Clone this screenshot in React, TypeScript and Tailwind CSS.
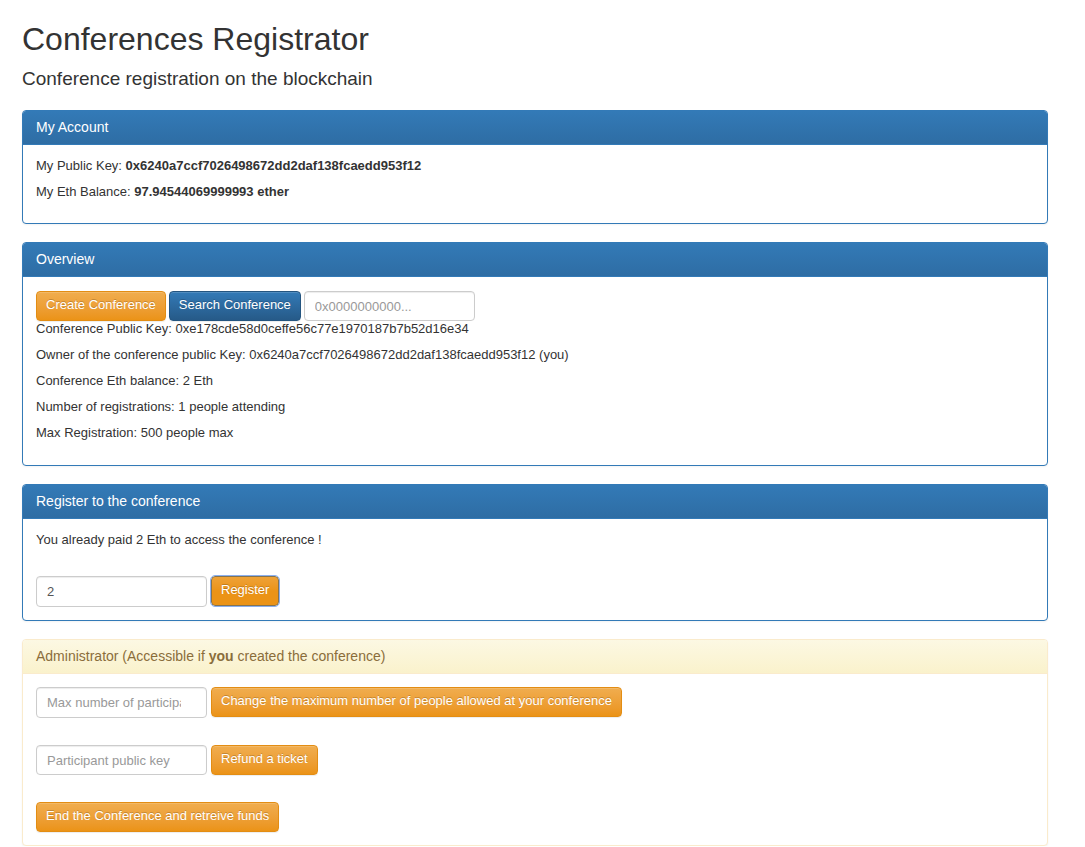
import type { ButtonHTMLAttributes, InputHTMLAttributes, ReactNode } from "react";
import clsx from "clsx";

type PanelProps = {
  title: ReactNode;
  tone?: "primary" | "warning";
  bodyClassName?: string;
  children: ReactNode;
};

function Panel({ title, tone = "primary", bodyClassName, children }: PanelProps) {
  const primary = tone === "primary";
  return (
    <section
      className={clsx(
        "rounded border bg-white shadow-[0_1px_2px_rgba(0,0,0,0.05)]",
        primary ? "border-[#337ab7]" : "border-[#faebcc]",
      )}
    >
      <h2
        className={clsx(
          "rounded-t-[3px] border-b px-[13px] py-2 text-[14px] leading-[17px]",
          primary
            ? "border-[#337ab7] bg-linear-to-b from-[#337ab7] to-[#2e6da4] text-white"
            : "border-[#faebcc] bg-linear-to-b from-[#fcf8e3] to-[#faf2cc] text-[#8a6d3b]",
        )}
      >
        {title}
      </h2>
      <div className={clsx("px-[13px]", bodyClassName)}>{children}</div>
    </section>
  );
}

type ButtonProps = ButtonHTMLAttributes<HTMLButtonElement> & {
  tone?: "primary" | "warning";
  focused?: boolean;
};

function Button({ tone = "warning", focused = false, ...props }: ButtonProps) {
  return (
    <button
      type="button"
      className={clsx(
        "h-[30px] cursor-pointer rounded border px-[9px] pb-0.5 text-[13px] leading-[18px] whitespace-nowrap text-white text-shadow-[0_-1px_0_rgba(0,0,0,0.2)]",
        tone === "primary" && "border-[#245580] bg-linear-to-b from-[#337ab7] to-[#265a88]",
        tone === "warning" && !focused && "border-[#e38d13] bg-linear-to-b from-[#f0ad4e] to-[#eb9316]",
        focused
          ? "border-[#85734f] bg-linear-to-b from-[#eea236] via-[#eb9316] to-[#eb9316] outline-1 outline-[#8ab0f0]"
          : "shadow-[inset_0_1px_0_rgba(255,255,255,0.15),0_1px_1px_rgba(0,0,0,0.075)]",
      )}
      {...props}
    />
  );
}

function Field({ label, ...props }: InputHTMLAttributes<HTMLInputElement> & { label: string }) {
  return (
    <input
      aria-label={label}
      className={clsx(
        "w-[171px] rounded border border-[#cccccc] bg-white px-[10px] text-[13px] leading-[18px] text-[#555555] shadow-[inset_0_1px_1px_rgba(0,0,0,0.075)] placeholder:text-[#999999]",
        props.type === "number" ? "h-[31px]" : "h-[30px]",
      )}
      {...props}
    />
  );
}

const conferenceDetails = [
  "Conference Public Key: 0xe178cde58d0ceffe56c77e1970187b7b52d16e34",
  "Owner of the conference public Key: 0x6240a7ccf7026498672dd2daf138fcaedd953f12 (you)",
  "Conference Eth balance: 2 Eth",
  "Number of registrations: 1 people attending",
  "Max Registration: 500 people max",
];

export default function App() {
  return (
    <main className="bg-white pt-5 pr-[37px] pl-[22px] font-['Liberation_Sans',Arial,sans-serif] text-[13px] leading-[18px] text-[#333333]">
      <header>
        <h1 className="text-[32px] leading-[38px]">Conferences Registrator</h1>
        <p className="mt-[9px] text-[19px] leading-6">Conference registration on the blockchain</p>
      </header>

      <div className="mt-[19px] flex flex-col gap-[18px]">
        <Panel title="My Account" bodyClassName="flex flex-col gap-2 pt-3 pb-[22px]">
          <p>
            My Public Key: <strong>0x6240a7ccf7026498672dd2daf138fcaedd953f12</strong>
          </p>
          <p>
            My Eth Balance: <strong>97.94544069999993 ether</strong>
          </p>
        </Panel>

        <Panel title="Overview" bodyClassName="pt-[14px] pb-[23px]">
          <div className="flex h-[29px] items-start gap-[3px]">
            <Button>Create Conference</Button>
            <Button tone="primary">Search Conference</Button>
            <Field type="text" label="Conference address" placeholder="0x0000000000..." />
          </div>
          <div className="flex flex-col gap-2">
            {conferenceDetails.map((line) => (
              <p key={line}>{line}</p>
            ))}
          </div>
        </Panel>

        <Panel title="Register to the conference" bodyClassName="pt-3 pb-[13px]">
          <p>You already paid 2 Eth to access the conference !</p>
          <div className="mt-[27px] flex items-start gap-1">
            <Field type="number" label="Amount in Eth" defaultValue={2} />
            <Button focused>Register</Button>
          </div>
        </Panel>

        <Panel
          tone="warning"
          title={
            <>
              Administrator (Accessible if <strong>you</strong> created the conference)
            </>
          }
          bodyClassName="flex flex-col gap-[27px] pt-[13px] pb-[13px]"
        >
          <div className="flex items-start gap-1">
            <Field type="number" label="Max number of participants" placeholder="Max number of participants" />
            <Button>Change the maximum number of people allowed at your conference</Button>
          </div>
          <div className="flex items-start gap-1">
            <Field type="text" label="Participant public key" placeholder="Participant public key" />
            <Button>Refund a ticket</Button>
          </div>
          <div className="flex items-start">
            <Button>End the Conference and retreive funds</Button>
          </div>
        </Panel>
      </div>
    </main>
  );
}
